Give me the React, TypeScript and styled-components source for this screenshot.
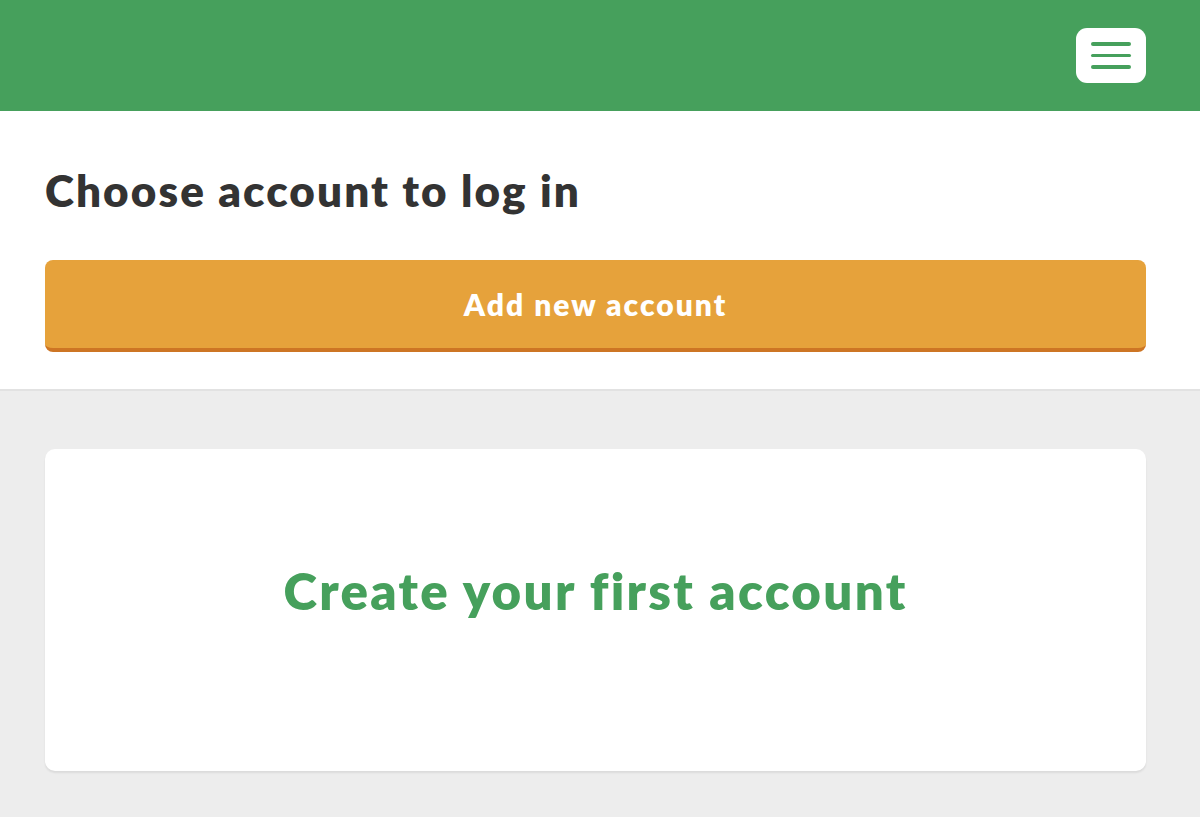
import React from "react";
import styled, { createGlobalStyle } from "styled-components";

const GlobalStyle = createGlobalStyle`
  html, body {
    margin: 0;
    padding: 0;
    background: #ededed;
    font-family: Lato, "Open Sans", Arial, sans-serif;
  }
`;

const Page = styled.div`
  width: 1200px;
  min-height: 817px;
  background: #ededed;
`;

const TopBar = styled.header`
  height: 111px;
  background: #46a05c;
  display: flex;
  align-items: flex-start;
  justify-content: flex-end;
  padding: 28px 54px 0 0;
  box-sizing: border-box;
`;

const MenuButton = styled.button`
  width: 70px;
  height: 55px;
  border: none;
  border-radius: 11px;
  background: #ffffff;
  display: flex;
  flex-direction: column;
  align-items: center;
  justify-content: center;
  gap: 8px;
  padding: 0;
  cursor: pointer;
`;

const MenuLine = styled.span`
  display: block;
  width: 40px;
  height: 3.5px;
  border-radius: 2px;
  background: #46a05c;
`;

const AccountSection = styled.section`
  background: #ffffff;
  padding: 49px 54px 37px 45px;
  border-bottom: 2px solid #e2e2e2;
`;

const Title = styled.h1`
  margin: 0 0 40px;
  font-size: 44px;
  line-height: 60px;
  font-weight: 800;
  color: #333333;
  letter-spacing: 2.1px;
`;

const AddButton = styled.button`
  width: 100%;
  height: 92px;
  border: none;
  border-bottom: 4px solid #cd7524;
  border-radius: 8px;
  background: #e6a23b;
  color: #ffffff;
  font-family: inherit;
  font-size: 30px;
  font-weight: 800;
  letter-spacing: 2px;
  cursor: pointer;
  padding: 0;
`;

const Content = styled.main`
  padding: 58px 54px 0 45px;
`;

const EmptyCard = styled.div`
  height: 322px;
  box-sizing: border-box;
  padding-bottom: 40px;
  background: #ffffff;
  border-radius: 10px;
  box-shadow: 0 2px 2px rgba(0, 0, 0, 0.08);
  display: flex;
  align-items: center;
  justify-content: center;
`;

const EmptyText = styled.h2`
  margin: 0;
  font-size: 51px;
  font-weight: 800;
  color: #46a05c;
  letter-spacing: 2.3px;
`;

export default function App() {
  return (
    <Page>
      <GlobalStyle />
      <TopBar>
        <MenuButton aria-label="Menu">
          <MenuLine />
          <MenuLine />
          <MenuLine />
        </MenuButton>
      </TopBar>
      <AccountSection>
        <Title>Choose account to log in</Title>
        <AddButton>Add new account</AddButton>
      </AccountSection>
      <Content>
        <EmptyCard>
          <EmptyText>Create your first account</EmptyText>
        </EmptyCard>
      </Content>
    </Page>
  );
}
